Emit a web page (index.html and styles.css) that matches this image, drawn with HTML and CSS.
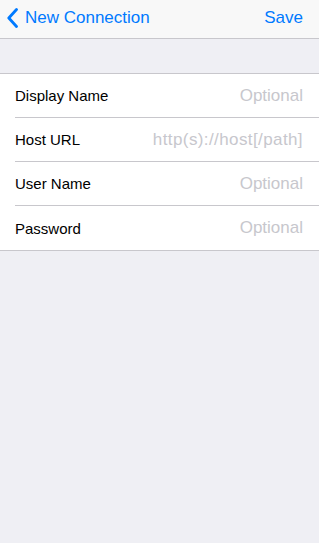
FILE: index.html
```html
<!DOCTYPE html>
<html>
  <head>
    <meta charset="UTF-8" />
    <title>New Connection</title>
    <link rel="stylesheet" href="styles.css">
  </head>

  <body>
    <header class="nav-bar">
      <a class="nav-back">
        <svg class="chevron" width="11" height="20" viewBox="0 0 11 20">
          <path d="M9.5 1.5 L1.8 10 L9.5 18.5" fill="none" stroke="#007aff" stroke-width="2.8" stroke-linecap="round" stroke-linejoin="round" />
        </svg>
        <span>New Connection</span>
      </a>
      <a class="nav-action">Save</a>
    </header>
    <div class="content">
      <ul class="table-view">
        <li class="table-cell">
          <label>Display Name</label>
          <input type="text" placeholder="Optional" />
        </li>
        <li class="table-cell">
          <label>Host URL</label>
          <input class="url" type="text" placeholder="http(s)://host[/path]" />
        </li>
        <li class="table-cell">
          <label>User Name</label>
          <input type="text" placeholder="Optional" />
        </li>
        <li class="table-cell">
          <label>Password</label>
          <input type="password" placeholder="Optional" />
        </li>
      </ul>
    </div>
  </body>
</html>
```

FILE: styles.css
```css
html,
body {
  margin: 0;
  height: 100%;
  background: #efeff4;
  font-family: "Liberation Sans", Arial, sans-serif;
}

.nav-bar {
  box-sizing: border-box;
  height: 39px;
  background: #f8f8f8;
  border-bottom: 1px solid #c8c7cc;
  display: flex;
  align-items: center;
  justify-content: space-between;
  padding: 0 16px 2px 7px;
  font-size: 17px;
  color: #007aff;
}

.nav-back {
  display: flex;
  align-items: center;
  gap: 7px;
}

.chevron {
  display: block;
}

.content {
  padding-top: 34px;
}

.table-view {
  list-style: none;
  margin: 0;
  padding: 0 0 0 15px;
  background: white;
  border-top: 1px solid #c8c7cc;
  border-bottom: 1px solid #c8c7cc;
}

.table-cell {
  height: 43px;
  display: flex;
  align-items: center;
  padding-right: 16px;
  border-bottom: 1px solid #c8c7cc;
}

.table-cell:last-child {
  height: 44px;
  border-bottom: none;
}

.table-cell label {
  font-size: 15px;
  color: #000;
  white-space: nowrap;
}

.table-cell input {
  flex: 1;
  min-width: 0;
  border: none;
  outline: none;
  background: transparent;
  padding: 0;
  text-align: right;
  font-family: inherit;
  font-size: 17px;
}

.table-cell input.url {
  letter-spacing: 0.4px;
}

.table-cell input::placeholder {
  color: #c7c7cd;
}
```
